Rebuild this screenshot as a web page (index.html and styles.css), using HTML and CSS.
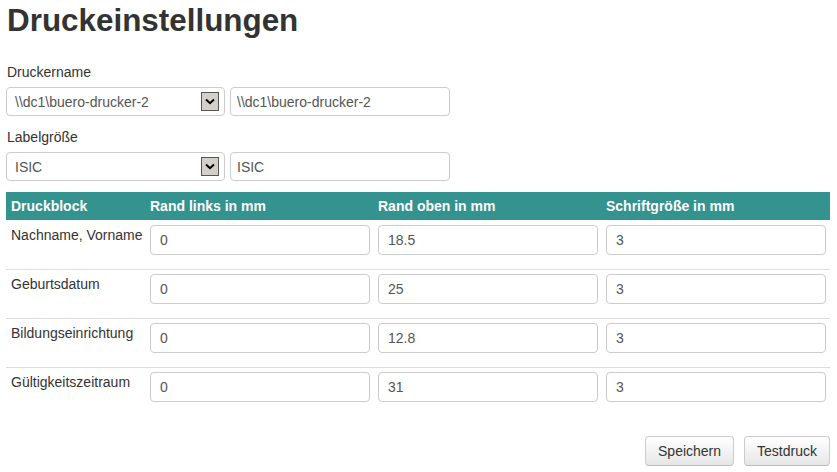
FILE: index.html
```html
<!DOCTYPE html>
<html>
<head>
    <meta charset="utf-8">
    <title>Druckeinstellungen</title>
    <link rel="stylesheet" href="styles.css">
</head>
<body>
    <div class="page">
        <h1>Druckeinstellungen</h1>

        <label class="label">Druckername</label>
        <div class="pair">
            <div class="select">
                <span class="select-text">\\dc1\buero-drucker-2</span>
                <span class="select-btn">
                    <svg width="10" height="7" viewBox="0 0 10 7"><path d="M1 1.5 L5 5.2 L9 1.5" fill="none" stroke="#000" stroke-width="2"/></svg>
                </span>
            </div>
            <input class="field" type="text" value="\\dc1\buero-drucker-2">
        </div>

        <label class="label label-2">Labelgröße</label>
        <div class="pair">
            <div class="select">
                <span class="select-text">ISIC</span>
                <span class="select-btn">
                    <svg width="10" height="7" viewBox="0 0 10 7"><path d="M1 1.5 L5 5.2 L9 1.5" fill="none" stroke="#000" stroke-width="2"/></svg>
                </span>
            </div>
            <input class="field" type="text" value="ISIC">
        </div>

        <div class="grid">
            <div class="grid-head">
                <div class="cell">Druckblock</div>
                <div class="cell">Rand links in mm</div>
                <div class="cell">Rand oben in mm</div>
                <div class="cell">Schriftgröße in mm</div>
            </div>
            <div class="grid-row first">
                <div class="cell name">Nachname, Vorname</div>
                <div class="cell"><input class="num" type="text" value="0"></div>
                <div class="cell"><input class="num" type="text" value="18.5"></div>
                <div class="cell"><input class="num" type="text" value="3"></div>
            </div>
            <div class="grid-row">
                <div class="cell name">Geburtsdatum</div>
                <div class="cell"><input class="num" type="text" value="0"></div>
                <div class="cell"><input class="num" type="text" value="25"></div>
                <div class="cell"><input class="num" type="text" value="3"></div>
            </div>
            <div class="grid-row">
                <div class="cell name">Bildungseinrichtung</div>
                <div class="cell"><input class="num" type="text" value="0"></div>
                <div class="cell"><input class="num" type="text" value="12.8"></div>
                <div class="cell"><input class="num" type="text" value="3"></div>
            </div>
            <div class="grid-row">
                <div class="cell name">Gültigkeitszeitraum</div>
                <div class="cell"><input class="num" type="text" value="0"></div>
                <div class="cell"><input class="num" type="text" value="31"></div>
                <div class="cell"><input class="num" type="text" value="3"></div>
            </div>
        </div>

        <div class="actions">
            <button class="btn" type="button">Speichern</button>
            <button class="btn" type="button">Testdruck</button>
        </div>
    </div>
</body>
</html>
```

FILE: styles.css
```css
*{margin:0;padding:0;box-sizing:border-box;}
body{font-family:"Liberation Sans", Arial, sans-serif;font-size:14px;line-height:20px;color:#333;background:#fff;}
.page{padding:0 7px 0 6px;}
h1{font-size:31.4px;line-height:34px;font-weight:bold;margin-top:4px;margin-left:1px;color:#333;}

.label{display:block;margin-top:24px;margin-left:1px;}
.label-2{margin-top:11px;}
.pair{display:flex;gap:5px;margin-top:5px;}

.select{
    width:219px;
    height:29px;
    border:1px solid #ccc;
    border-radius:4px;
    display:flex;
    align-items:center;
    padding:0 5px 0 8px;
    color:#555;
}
.select-text{flex:1;}
.select-btn{
    width:18px;
    height:19px;
    background:#d4d0c8;
    border:1px solid #555;
    display:flex;
    align-items:center;
    justify-content:center;
}
.field{
    width:220px;
    height:29px;
    border:1px solid #ccc;
    border-radius:4px;
    padding:0 6px;
    font:14px "Liberation Sans", Arial, sans-serif;
    color:#555;
}

.grid{margin-top:11px;width:824px;}
.grid-head, .grid-row{display:grid;grid-template-columns:139px 228px 228px 229px;}
.grid-head{background:#34928f;color:#fff;font-weight:bold;height:28px;}
.grid-head .cell{padding:4px 5px;}
.grid-row{border-top:1px solid #ddd;padding:4px 0 14px;}
.grid-row.first{border-top:none;padding-top:5px;}
.grid-row .cell{padding:0 0 0 5px;}
.num{
    width:220px;
    height:30px;
    border:1px solid #ccc;
    border-radius:4px;
    padding:0 9px;
    font:14px "Liberation Sans", Arial, sans-serif;
    color:#555;
}

.actions{display:flex;justify-content:flex-end;gap:10px;margin-top:20px;}
.btn{
    height:30px;
    padding:0 12px;
    font:14px "Liberation Sans", Arial, sans-serif;
    color:#333;
    border:1px solid #ccc;
    border-bottom-color:#bbb;
    border-radius:4px;
    background:linear-gradient(#fff, #e6e6e6);
}
```
